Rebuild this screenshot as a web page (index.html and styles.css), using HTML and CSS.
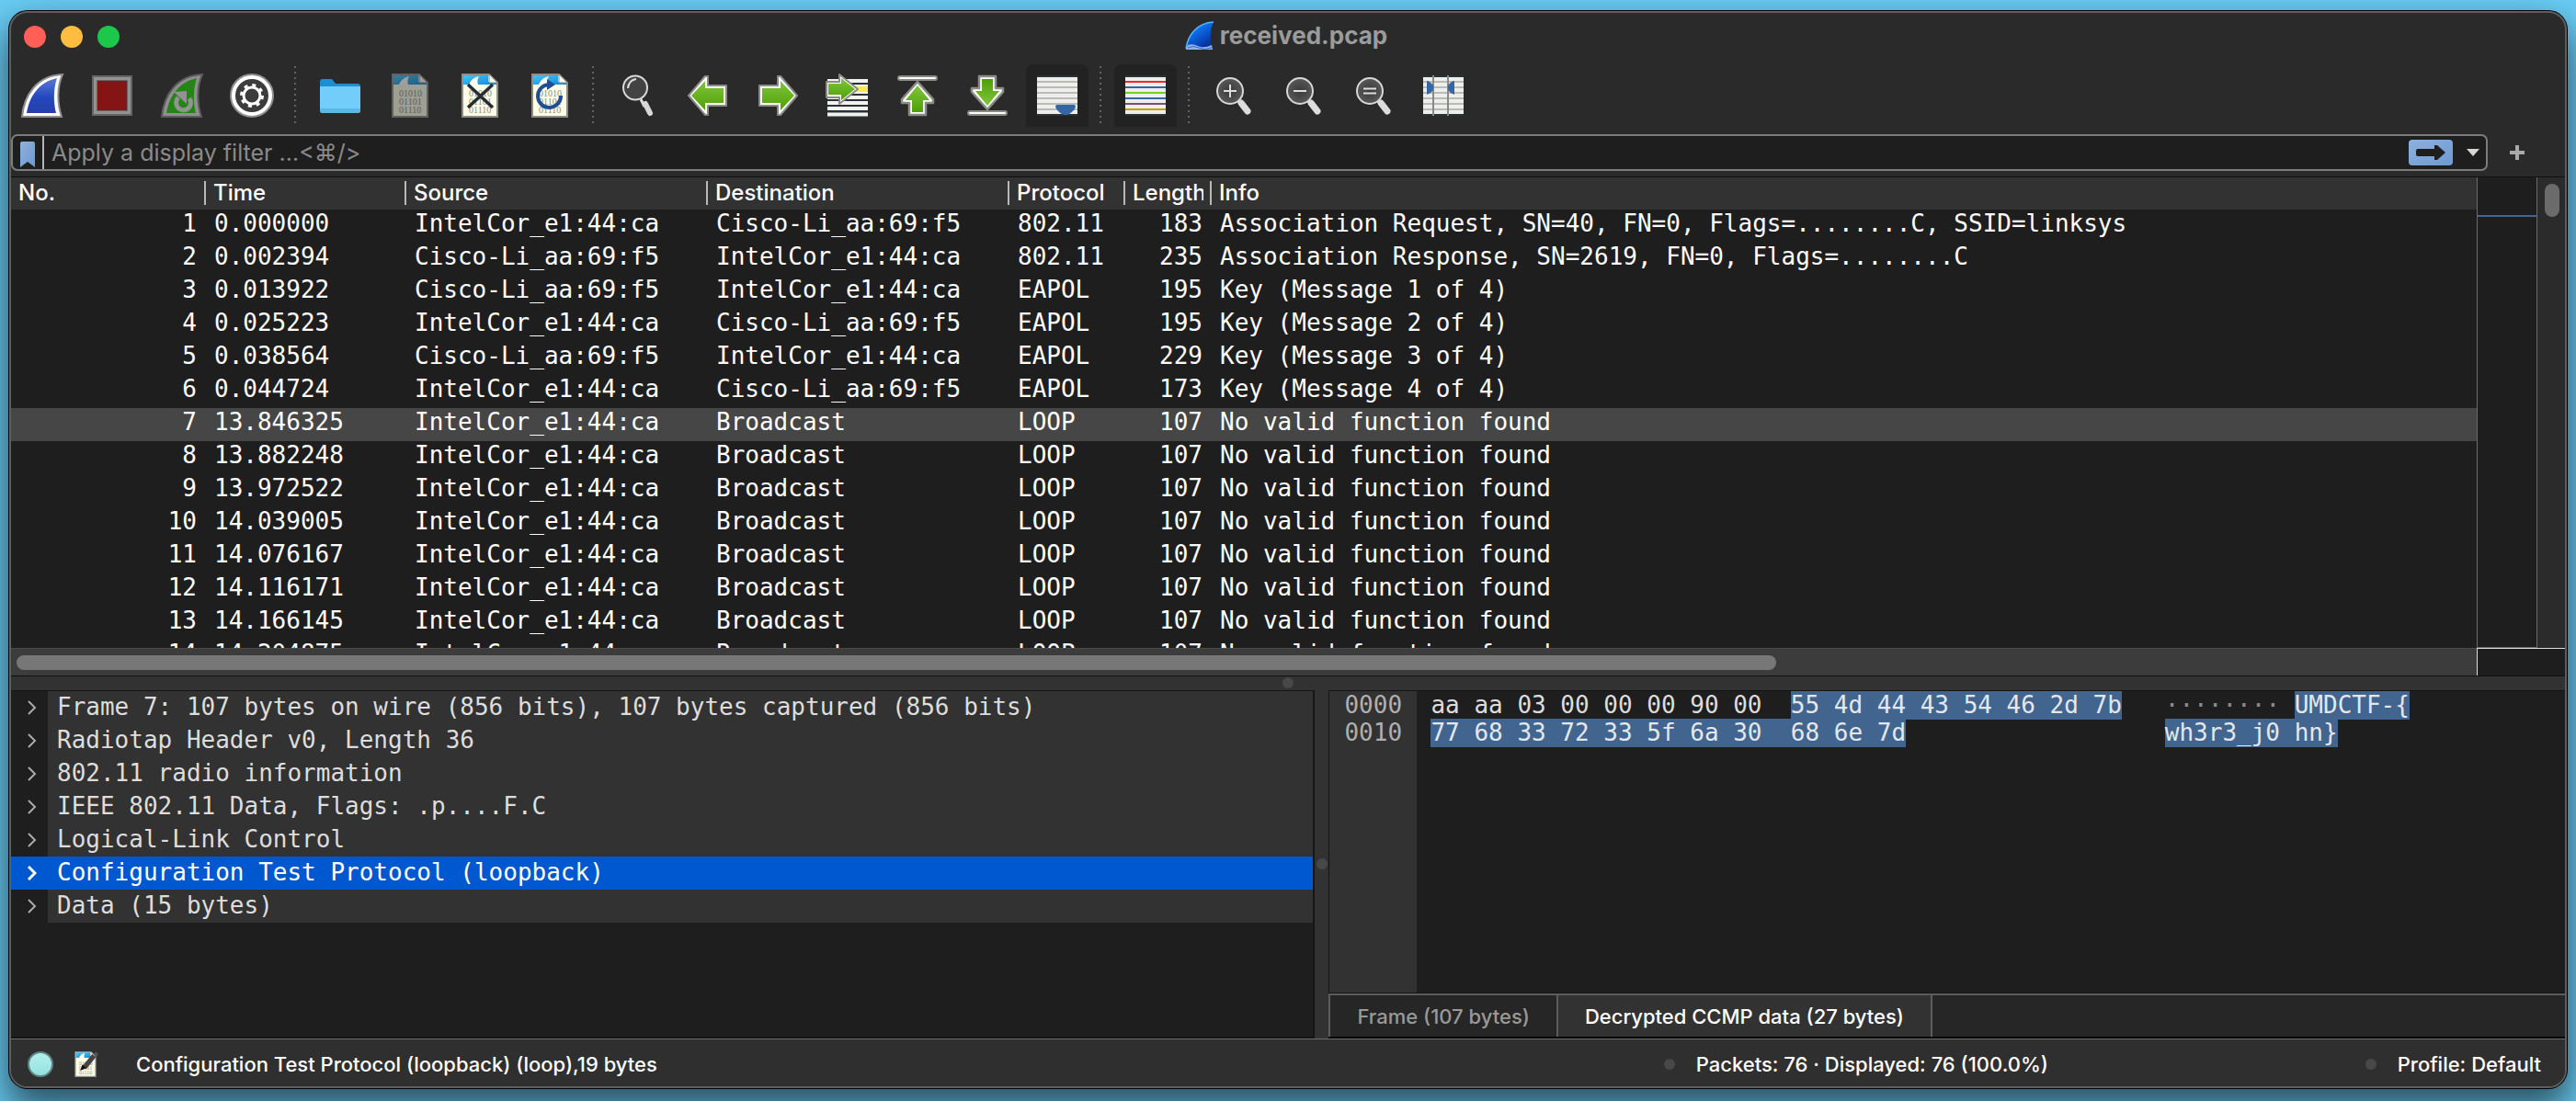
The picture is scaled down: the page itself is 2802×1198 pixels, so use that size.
FILE: index.html
```html
<!DOCTYPE html>
<html lang="en">
<head>
<meta charset="utf-8">
<title>received.pcap</title>
<link rel="stylesheet" href="styles.css">
</head>
<body>
<svg class="defs" width="0" height="0" aria-hidden="true">
  <defs>
    <linearGradient id="g-blue" x1="0" y1="0" x2="0" y2="1"><stop offset="0" stop-color="#5b78d8"/><stop offset=".55" stop-color="#2448bd"/><stop offset="1" stop-color="#263fa6"/></linearGradient>
    <linearGradient id="g-fin" x1="0" y1="0" x2=".7" y2="1"><stop offset="0" stop-color="#1f9dff"/><stop offset=".5" stop-color="#0b63dd"/><stop offset="1" stop-color="#062a94"/></linearGradient>
    <linearGradient id="g-green" x1="0" y1="0" x2="0" y2="1"><stop offset="0" stop-color="#80c63c"/><stop offset="1" stop-color="#4e9f06"/></linearGradient>
    <linearGradient id="g-sky" x1="0" y1="0" x2="1" y2="1"><stop offset="0" stop-color="#4cc0f4"/><stop offset="1" stop-color="#0b8ad8"/></linearGradient>
    <linearGradient id="g-soft" x1="0" y1="0" x2="1" y2="1"><stop offset="0" stop-color="#8fb1de"/><stop offset="1" stop-color="#6b9ad0"/></linearGradient>
    <radialGradient id="g-lens"><stop offset="0" stop-color="#3a3a3a"/><stop offset="1" stop-color="#585858"/></radialGradient>
    <symbol id="doc" viewBox="0 0 48 48">
      <path d="M5 1H34L43 10V47H5Z" fill="#fefee8" stroke="#8d8d85" stroke-width="2"/>
      <path d="M6 2H33V9H42V12H6Z" fill="url(#g-sky)"/>
      <path d="M12 12C14 7 18 4 23 3C21 6 21 9 22 12Z" fill="#fff"/>
      <path d="M34 1V10H43Z" fill="#fdfdf5" stroke="#8d8d85" stroke-width="1"/>
      <g font-family="Liberation Serif, serif" font-size="10" fill="#8a8a82"><text x="12" y="25">01010</text><text x="12" y="34">01101</text><text x="12" y="43">01110</text></g>
    </symbol>
    <symbol id="lens" viewBox="0 0 48 48">
      <path d="M28 28L38 40" stroke="#ddd" stroke-width="4" /><path d="M32 32L39 41" stroke="#ddd" stroke-width="7" stroke-linecap="round"/>
      <circle cx="20" cy="19" r="14" fill="url(#g-lens)" stroke="#d8d8d8" stroke-width="2"/>
    </symbol>
    <symbol id="left" viewBox="0 0 48 48"><path d="M3 24L21 3L24 3V13H44V35H24V45L21 45Z" fill="#fff" stroke="#8b8b85" stroke-width="2" stroke-linejoin="round"/><path d="M6 24L21 8V16H41V32H21V40Z" fill="url(#g-green)"/></symbol>
    <symbol id="up" viewBox="0 0 48 48"><path d="M24 9L41 28V32H33V45H15V32H7V28Z" fill="#fff" stroke="#8b8b85" stroke-width="2.500" stroke-linejoin="round"/><path d="M24 13L37 29H30V42H18V29H11Z" fill="url(#g-green)"/></symbol>
  </defs>
</svg>

<main class="window">
  <header class="titlebar">
    <div class="lights">
      <button class="light light-close" aria-label="Close"></button>
      <button class="light light-min" aria-label="Minimize"></button>
      <button class="light light-max" aria-label="Zoom"></button>
    </div>
    <h1 class="title">
      <svg width="32" height="32" viewBox="0 0 32 32" aria-hidden="true"><path d="M1 30C3 15 13 2 31 1C27 9 27 20 30 30Z" fill="url(#g-fin)"/><path d="M1 30C3 15 13 2 31 1" fill="none" stroke="#58b4ff" stroke-width="1.500"/><path d="M1 31L3 26Q8 24 14 27T29 26L30 31Z" fill="#8db3ea"/><path d="M3 29Q9 26 15 29T29 29" stroke="#3b68bd" fill="none"/></svg>
      <span>received.pcap</span>
    </h1>
  </header>

  <nav class="toolbar" aria-label="Main toolbar">
    <button class="tool" aria-label="Start capture"><svg viewBox="0 0 48 48"><path d="M2 47C4 24 18 2 46 1C40 14 40 32 45 47Z" fill="#fff" stroke="#8f8f8f" stroke-width="2"/><path d="M7 43C10 24 21 9 40 5C36 17 36 31 39 43Z" fill="url(#g-blue)"/></svg></button>
    <button class="tool" aria-label="Stop capture"><svg viewBox="0 0 48 48"><path d="M3 3H45V45H3Z" fill="#929292" stroke="#656565" stroke-width="2"/><path d="M7.500 7.500H40.500V40.500H7.500Z" fill="#851515" stroke="#656565"/></svg></button>
    <button class="tool" aria-label="Restart capture"><svg viewBox="0 0 48 48"><path d="M2 47C4 24 18 2 46 1C40 14 40 32 45 47Z" fill="#8f8f8f" stroke="#5c5c5c" stroke-width="2"/><path d="M7 43C10 24 21 9 40 5C36 17 36 31 39 43Z" fill="#258416"/><path d="M20 26A8 8 0 1 0 32 27" fill="none" stroke="#929292" stroke-width="5"/><path d="M15 20L29 19L29 33Z" fill="#929292"/></svg></button>
    <button class="tool" aria-label="Capture options"><svg viewBox="0 0 48 48"><circle cx="24" cy="24" r="23" fill="#fff" stroke="#8f8f8f" stroke-width="2"/><circle cx="24" cy="24" r="18" fill="#3c3c3c"/><circle cx="24" cy="24" r="9" fill="none" stroke="#fff" stroke-width="3"/><circle cx="24" cy="24" r="11.500" fill="none" stroke="#fff" stroke-width="3" stroke-dasharray="4 5.030"/></svg></button>
    <span class="sep"></span>
    <button class="tool" aria-label="Open"><svg viewBox="0 0 48 48"><path d="M2 9Q2 6 5 6H15L19 11H43Q46 11 46 14V20H2Z" fill="#1b8fd0"/><path d="M2 14H46V40Q46 43 43 43H5Q2 43 2 40Z" fill="#73cdfb"/><path d="M2 38H46V40Q46 43 43 43H5Q2 43 2 40Z" fill="#5bb7e8"/></svg></button>
    <button class="tool" aria-label="Save" disabled><svg class="dim" viewBox="0 0 48 48"><use href="#doc"/></svg></button>
    <button class="tool" aria-label="Close file"><svg viewBox="0 0 48 48"><use href="#doc"/><path d="M11 12L38 37M38 12L11 37" stroke="#252d33" stroke-width="3.500"/></svg></button>
    <button class="tool" aria-label="Reload"><svg viewBox="0 0 48 48"><use href="#doc"/><path d="M23 12A12.500 12.500 0 1 0 36 24" fill="none" stroke="#1f4f92" stroke-width="4"/><path d="M21 6L30 12L21 18Z" fill="#1f4f92"/></svg></button>
    <span class="sep"></span>
    <button class="tool" aria-label="Find packet"><svg viewBox="0 0 48 48"><path d="M27 28L31 36" stroke="#ddd" stroke-width="3"/><path d="M32 33L37 43" stroke="#d8d8d8" stroke-width="6" stroke-linecap="round"/><circle cx="21" cy="15.500" r="13" fill="#434343" stroke="#d8d8d8" stroke-width="2"/><path d="M13 16Q14 7 22 6" fill="none" stroke="#ddd" stroke-width="2"/></svg></button>
    <button class="tool" aria-label="Previous packet"><svg viewBox="0 0 48 48"><use href="#left"/></svg></button>
    <button class="tool" aria-label="Next packet"><svg viewBox="0 0 48 48"><use href="#left" transform="matrix(-1 0 0 1 48 0)"/></svg></button>
    <button class="tool" aria-label="Go to packet"><svg viewBox="0 0 48 48"><path d="M2 6H46V48H2Z" fill="#2a3237"/><path d="M2 8H46M2 14H46M2 20H46M2 26H46M2 32H46M2 38H46M2 44.500H46" stroke="#f2f2ef" stroke-width="4"/><path d="M30 14H46V20H30Z" fill="#fce94f"/><path d="M1 9H15V1L35 17L15 33V26H1Z" fill="#fff" stroke="#8b8b85" stroke-width="2" stroke-linejoin="round"/><path d="M3 11H17V5L32 17L17 29V23H3Z" fill="url(#g-green)"/></svg></button>
    <button class="tool" aria-label="First packet"><svg viewBox="0 0 48 48"><use href="#up"/><rect x="3" y="3" width="42" height="4" rx="2" fill="#fff" stroke="#8b8b85" stroke-width="2"/></svg></button>
    <button class="tool" aria-label="Last packet"><svg viewBox="0 0 48 48"><use href="#up" transform="matrix(1 0 0 -1 0 48)"/><rect x="3" y="41" width="42" height="4" rx="2" fill="#fff" stroke="#8b8b85" stroke-width="2"/></svg></button>
    <button class="tool on" aria-label="Auto scroll" aria-pressed="true"><svg viewBox="0 0 48 48"><path d="M2 2H46V46H2Z" fill="#2a3237"/><path d="M2 4H46V44H2Z" fill="#eeeeec"/><path d="M2 9H46M2 15H46M2 21H46M2 27H46M2 33H46M2 39H46" stroke="#babdb6" stroke-width="2"/><path d="M22 36Q22 34 24 34H42Q44 34 44 36Q42 42 35 45H31Q24 42 22 36Z" fill="#3465a4"/></svg></button>
    <span class="sep"></span>
    <button class="tool on" aria-label="Colorize" aria-pressed="true"><svg viewBox="0 0 48 48"><path d="M2 2H46V46H2Z" fill="#2a3237"/><path d="M2 4H46V44H2Z" fill="#eeeeec"/><path d="M2 9H46" stroke="#ef2929" stroke-width="2"/><path d="M2 15H46M2 27H46" stroke="#3465a4" stroke-width="2"/><path d="M2 21H46" stroke="#73d216" stroke-width="2"/><path d="M2 33H46" stroke="#75507b" stroke-width="2"/><path d="M2 39H46" stroke="#c4a000" stroke-width="2"/></svg></button>
    <span class="sep"></span>
    <button class="tool" aria-label="Zoom in"><svg viewBox="0 0 48 48"><use href="#lens"/><path d="M13 19H27M20 12V26" stroke="#ddd" stroke-width="2"/></svg></button>
    <button class="tool" aria-label="Zoom out"><svg viewBox="0 0 48 48"><use href="#lens"/><path d="M13 19H27" stroke="#ddd" stroke-width="2"/></svg></button>
    <button class="tool" aria-label="Normal size"><svg viewBox="0 0 48 48"><use href="#lens"/><path d="M13 16.500H27M13 21.500H27" stroke="#ddd" stroke-width="2"/></svg></button>
    <button class="tool" aria-label="Resize columns"><svg viewBox="0 0 48 48"><path d="M2 2H46V46H2Z" fill="#2a3237"/><path d="M2 4H46V44H2Z" fill="#eeeeec"/><path d="M2 9H46M2 15H46M2 21H46M2 27H46M2 33H46M2 39H46" stroke="#babdb6" stroke-width="2"/><path d="M13 2V46M29 2V46" stroke="#888a85" stroke-width="2"/><path d="M6 8Q9 8 13 13V18Q10 22 6 23ZM36 8Q33 8 29 13V18Q32 22 36 23Z" fill="#3465a4"/></svg></button>
  </nav>

  <form class="filter">
    <div class="field">
      <button class="bookmark" type="button" aria-label="Filter bookmarks"><svg width="16" height="28" viewBox="0 0 16 28"><path d="M2 0H14Q16 0 16 2V28L8 22L0 28V2Q0 0 2 0Z" fill="url(#g-soft)"/></svg></button>
      <input class="expr" type="text" aria-label="Display filter" placeholder="Apply a display filter …&lt;⌘/&gt;">
      <button class="apply" type="button" aria-label="Apply filter"><svg width="48" height="28" viewBox="0 0 48 28"><rect width="48" height="28" rx="4" fill="url(#g-soft)"/><path d="M10 10H28V6H31L40 14L31 22H28V18H10Q8 18 8 16V12Q8 10 10 10Z" fill="#1e1e1e"/></svg></button>
      <button class="recent" type="button" aria-label="Recent filters"><svg width="14" height="8" viewBox="0 0 14 8"><path d="M0 0H14L7 8Z" fill="#d8d8d2"/></svg></button>
    </div>
    <button class="add" type="button" aria-label="Add filter button"><svg width="16" height="16" viewBox="0 0 16 16"><path d="M6 0H10V6H16V10H10V16H6V10H0V6H6Z" fill="#a9a9a9"/></svg></button>
  </form>

  <section class="packets">
    <div class="list">
      <div class="list-view">
        <table class="table">
          <colgroup><col class="c-no"><col class="c-time"><col class="c-addr"><col class="c-addr"><col class="c-proto"><col class="c-len"><col></colgroup>
          <thead><tr><th>No.</th><th>Time</th><th>Source</th><th>Destination</th><th>Protocol</th><th><span class="clip">Length</span></th><th>Info</th></tr></thead>
          <tbody>
            <tr><td>1</td><td>0.000000</td><td>IntelCor_e1:44:ca</td><td>Cisco-Li_aa:69:f5</td><td>802.11</td><td>183</td><td>Association Request, SN=40, FN=0, Flags=........C, SSID=linksys</td></tr>
            <tr><td>2</td><td>0.002394</td><td>Cisco-Li_aa:69:f5</td><td>IntelCor_e1:44:ca</td><td>802.11</td><td>235</td><td>Association Response, SN=2619, FN=0, Flags=........C</td></tr>
            <tr><td>3</td><td>0.013922</td><td>Cisco-Li_aa:69:f5</td><td>IntelCor_e1:44:ca</td><td>EAPOL</td><td>195</td><td>Key (Message 1 of 4)</td></tr>
            <tr><td>4</td><td>0.025223</td><td>IntelCor_e1:44:ca</td><td>Cisco-Li_aa:69:f5</td><td>EAPOL</td><td>195</td><td>Key (Message 2 of 4)</td></tr>
            <tr><td>5</td><td>0.038564</td><td>Cisco-Li_aa:69:f5</td><td>IntelCor_e1:44:ca</td><td>EAPOL</td><td>229</td><td>Key (Message 3 of 4)</td></tr>
            <tr><td>6</td><td>0.044724</td><td>IntelCor_e1:44:ca</td><td>Cisco-Li_aa:69:f5</td><td>EAPOL</td><td>173</td><td>Key (Message 4 of 4)</td></tr>
            <tr class="current"><td>7</td><td>13.846325</td><td>IntelCor_e1:44:ca</td><td>Broadcast</td><td>LOOP</td><td>107</td><td>No valid function found</td></tr>
            <tr><td>8</td><td>13.882248</td><td>IntelCor_e1:44:ca</td><td>Broadcast</td><td>LOOP</td><td>107</td><td>No valid function found</td></tr>
            <tr><td>9</td><td>13.972522</td><td>IntelCor_e1:44:ca</td><td>Broadcast</td><td>LOOP</td><td>107</td><td>No valid function found</td></tr>
            <tr><td>10</td><td>14.039005</td><td>IntelCor_e1:44:ca</td><td>Broadcast</td><td>LOOP</td><td>107</td><td>No valid function found</td></tr>
            <tr><td>11</td><td>14.076167</td><td>IntelCor_e1:44:ca</td><td>Broadcast</td><td>LOOP</td><td>107</td><td>No valid function found</td></tr>
            <tr><td>12</td><td>14.116171</td><td>IntelCor_e1:44:ca</td><td>Broadcast</td><td>LOOP</td><td>107</td><td>No valid function found</td></tr>
            <tr><td>13</td><td>14.166145</td><td>IntelCor_e1:44:ca</td><td>Broadcast</td><td>LOOP</td><td>107</td><td>No valid function found</td></tr>
            <tr><td>14</td><td>14.204875</td><td>IntelCor_e1:44:ca</td><td>Broadcast</td><td>LOOP</td><td>107</td><td>No valid function found</td></tr>
          </tbody>
        </table>
      </div>
      <div class="hscroll"><div class="hthumb"></div></div>
    </div>
    <div class="side">
      <div class="side-top">
        <div class="minimap"><div class="mark-line"></div></div>
        <div class="vscroll"><div class="vthumb"></div></div>
      </div>
      <div class="corner"></div>
    </div>
  </section>

  <div class="split-h"><span class="grip"></span></div>

  <section class="lower">
    <ul class="tree" aria-label="Packet details">
      <li><button class="twist" aria-label="Expand"><svg width="10" height="16" viewBox="0 0 10 16"><path d="M1 1L8 8L1 15"/></svg></button><span class="node">Frame 7: 107 bytes on wire (856 bits), 107 bytes captured (856 bits)</span></li>
      <li><button class="twist" aria-label="Expand"><svg width="10" height="16" viewBox="0 0 10 16"><path d="M1 1L8 8L1 15"/></svg></button><span class="node">Radiotap Header v0, Length 36</span></li>
      <li><button class="twist" aria-label="Expand"><svg width="10" height="16" viewBox="0 0 10 16"><path d="M1 1L8 8L1 15"/></svg></button><span class="node">802.11 radio information</span></li>
      <li><button class="twist" aria-label="Expand"><svg width="10" height="16" viewBox="0 0 10 16"><path d="M1 1L8 8L1 15"/></svg></button><span class="node">IEEE 802.11 Data, Flags: .p....F.C</span></li>
      <li><button class="twist" aria-label="Expand"><svg width="10" height="16" viewBox="0 0 10 16"><path d="M1 1L8 8L1 15"/></svg></button><span class="node">Logical-Link Control</span></li>
      <li class="selected"><button class="twist" aria-label="Expand"><svg width="10" height="16" viewBox="0 0 10 16"><path d="M1 1L8 8L1 15"/></svg></button><span class="node">Configuration Test Protocol (loopback)</span></li>
      <li><button class="twist" aria-label="Expand"><svg width="10" height="16" viewBox="0 0 10 16"><path d="M1 1L8 8L1 15"/></svg></button><span class="node">Data (15 bytes)</span></li>
    </ul>
    <div class="split-v"><span class="grip"></span></div>
    <div class="bytes">
      <div class="hex">
        <pre class="offsets">0000
0010</pre>
        <pre class="dump">aa aa 03 00 00 00 90 00  <mark>55 4d 44 43 54 46 2d 7b</mark>   <span class="dots">········</span> <mark>UMDCTF-{</mark>
<mark>77 68 33 72 33 5f 6a 30  68 6e 7d</mark>                  <mark>wh3r3_j0 hn}</mark></pre>
      </div>
      <div class="tabs">
        <button class="tab">Frame (107 bytes)</button>
        <button class="tab active">Decrypted CCMP data (27 bytes)</button>
      </div>
    </div>
  </section>

  <footer class="status">
    <button class="led" aria-label="Expert information"></button>
    <button class="note" aria-label="Capture comment"><svg width="28" height="28" viewBox="0 0 48 48"><use href="#doc"/><path d="M40 8L22 30" stroke="#444" stroke-width="9"/><path d="M18 25L26 31L14 36Z" fill="#111"/><path d="M41 3L46 8" stroke="#555" stroke-width="6"/></svg></button>
    <span class="message">Configuration Test Protocol (loopback) (loop),19 bytes</span>
    <span class="cell counts"><span class="grip"></span>Packets: 76 · Displayed: 76 (100.0%)</span>
    <span class="cell profile"><span class="grip"></span>Profile: Default</span>
  </footer>
</main>
</body>
</html>
```
FILE: styles.css
```css
* { box-sizing: border-box; }

:root {
  --ui: Inter, "Noto Sans", sans-serif;
  --mono: "DejaVu Sans Mono", monospace;
  --base: #1e1e1e;
  --panel: #323232;
  --mark: #41658e;
}

body {
  margin: 0;
  height: 100vh;
  padding: 12px 10px 14px;
  background: #6acdf5;
  font: 500 22px/28px var(--ui);
  color: #fff;
  overflow: hidden;
}

button {
  margin: 0;
  padding: 0;
  border: 0;
  background: none;
  color: inherit;
  font: inherit;
}

svg { display: block; }
.defs { position: absolute; }

.window {
  display: flex;
  flex-direction: column;
  height: 100%;
  border: 2px solid #5e5e5e;
  border-radius: 20px;
  background: #2a2a2a;
  box-shadow: 0 0 0 1px #000, 0 20px 40px 4px rgba(0, 0, 0, .6);
  overflow: hidden;
}

/* Title bar */
.titlebar {
  display: grid;
  grid-template-columns: 1fr auto 1fr;
  align-items: center;
  height: 52px;
  padding: 0 14px;
}
.lights { display: flex; gap: 16px; }
.light { width: 24px; height: 24px; border-radius: 50%; }
.light-close { background: #ff5f57; }
.light-min { background: #febc40; }
.light-max { background: #1bc84c; }
.title {
  display: flex;
  align-items: center;
  gap: 6px;
  margin: 0;
  padding: 0 4px 2px 0;
  font-size: 26px;
  font-weight: 700;
  color: #9b9b9b;
}

/* Toolbar */
.toolbar { display: flex; gap: 8px; padding: 4px 0 8px; }
.tool {
  display: grid;
  place-items: center;
  width: 68px;
  height: 68px;
  border-radius: 8px 8px 0 0;
}
.tool svg { width: 48px; height: 48px; }
.tool.on { background: #222; }
.dim { opacity: .55; }
.sep {
  width: 12px;
  height: 62px;
  margin-top: 2px;
  background: repeating-linear-gradient(#646464 0 2px, transparent 2px 6px) 4px 0 / 2px 100% no-repeat;
}

/* Display filter */
.filter { display: flex; height: 46px; padding-bottom: 6px; padding-right: 20px; }
.field {
  display: flex;
  flex: 1;
  align-items: center;
  border: 2px solid #7c7c7c;
  border-radius: 7px;
  background: var(--base);
}
.bookmark { height: 36px; width: 34px; padding: 4px 0 0 8px; border-right: 2px solid #b5b5b5; }
.expr {
  flex: 1;
  min-width: 0;
  height: 36px;
  padding: 0 8px;
  border: 0;
  outline: 0;
  background: none;
  color: #fff;
  font: 400 25px/36px var(--ui);
}
.expr::placeholder { color: #8a8a8a; opacity: 1; }
.recent { padding: 0 7px 0 15px; }
.add { display: grid; place-items: center; width: 64px; }

/* Packet list */
.packets {
  display: flex;
  flex: 543 1 0;
  min-height: 0;
  border-top: 1px solid #101010;
  border-bottom: 1px solid #101010;
}
.list { display: flex; flex: 1; flex-direction: column; min-width: 0; }
.list-view { flex: 1; min-height: 0; overflow: hidden; background: var(--base); }
.table { width: 100%; table-layout: fixed; border-collapse: collapse; }
.c-no { width: 212px; }
.c-time { width: 218px; }
.c-addr { width: 328px; }
.c-proto { width: 126px; }
.c-len { width: 94px; }
.table th {
  height: 35px;
  padding: 0 9px 1px 8px;
  background: linear-gradient(#b9b9b9, #b9b9b9) right 4px / 2px 26px no-repeat, var(--panel);
  font-size: 24px;
  font-weight: 500;
  line-height: 34px;
  text-align: left;
  white-space: nowrap;
}
.table th:last-child { background: var(--panel); }
.clip { display: block; overflow: hidden; }
.table td {
  height: 36px;
  padding: 0 10px 6px 9px;
  font: 400 26px/30px var(--mono);
  white-space: nowrap;
}
.table td:first-child, .table td:nth-child(6) { text-align: right; }
.current { background: #464646; }
.hscroll { height: 30px; padding: 7px 6px; border-top: 1px solid #4b4b4b; background: #3c3c3c; }
.hthumb { width: 1914px; max-width: 72%; height: 16px; border-radius: 8px; background: #777; }

.side { display: flex; flex-direction: column; width: 96px; }
.side-top { display: flex; flex: 1; }
.minimap { width: 66px; padding-top: 41px; border: 1px solid #6a6a6a; border-top: 0; background: var(--base); }
.mark-line { height: 2px; background: var(--mark); }
.vscroll { flex: 1; padding: 7px 6px 0 8px; background: #2b2b2b; }
.vthumb { width: 16px; height: 36px; border-radius: 8px; background: #6b6b6b; }
.corner { height: 30px; border-top: 1px solid #ddd; border-left: 1px solid #ddd; background: var(--base); }

/* Splitters */
.split-h, .split-v { display: grid; place-items: center; background: var(--panel); }
.split-h { height: 15px; }
.split-v { width: 15px; }
.grip { width: 12px; height: 12px; border-radius: 50%; background: #484848; }

/* Lower panes */
.lower { display: flex; flex: 380 1 0; min-height: 0; }
.tree {
  flex: 1418 1 0;
  min-width: 0;
  margin: 0;
  padding: 0;
  border: solid #151515;
  border-width: 1px 2px 2px 0;
  background: var(--base);
  color: #ddd;
  font: 400 26px/34px var(--mono);
  list-style: none;
}
.tree li { display: flex; height: 36px; }
.twist { display: grid; place-items: center; width: 40px; padding-left: 6px; }
.twist path { fill: none; stroke: #aaa; stroke-width: 2; }
.node { flex: 1; padding-left: 10px; background: var(--panel); white-space: pre; }
.tree .selected { background: #0058d0; color: #fff; }
.selected .node { background: none; }
.selected .twist path { stroke: #fff; stroke-width: 3; }

.bytes { display: flex; flex: 1346 1 0; flex-direction: column; min-width: 0; }
.hex {
  display: flex;
  flex: 1;
  border: solid #151515;
  border-width: 1px 0 1px 1px;
  background: var(--base);
}
.offsets, .dump { margin: 0; font: 400 26px/30px var(--mono); }
.offsets { width: 95px; padding: 0 0 0 16px; background: var(--panel); color: #b0b0b0; }
.dump { padding: 0 0 0 15px; color: #ddd; }
.dump mark { padding-bottom: 1px; background: var(--mark); color: #e3e8ee; }
.dots { color: #8a8a8a; }

.tabs { display: flex; height: 49px; border-top: 2px solid #5c5c5c; border-bottom: 2px solid #000; background: #262626; }
.tab { padding: 0 29px; border-left: 2px solid #5c5c5c; color: #999; }
.tab.active { border-right: 2px solid #5c5c5c; background: var(--panel); color: #fff; }

/* Status bar */
.status {
  display: flex;
  align-items: center;
  height: 52px;
  padding: 2px 26px 0 18px;
  border-top: 1px solid #6e6e6e;
  background: #2f2f2f;
}
.led { width: 28px; height: 28px; border: 2px solid #5d8583; border-radius: 50%; background: linear-gradient(#b5efee, #93e2de); }
.note { margin-left: 21px; }
.message { flex: 1; margin-left: 41px; }
.cell { display: flex; align-items: center; gap: 23px; }
.counts { width: 763px; }
```
